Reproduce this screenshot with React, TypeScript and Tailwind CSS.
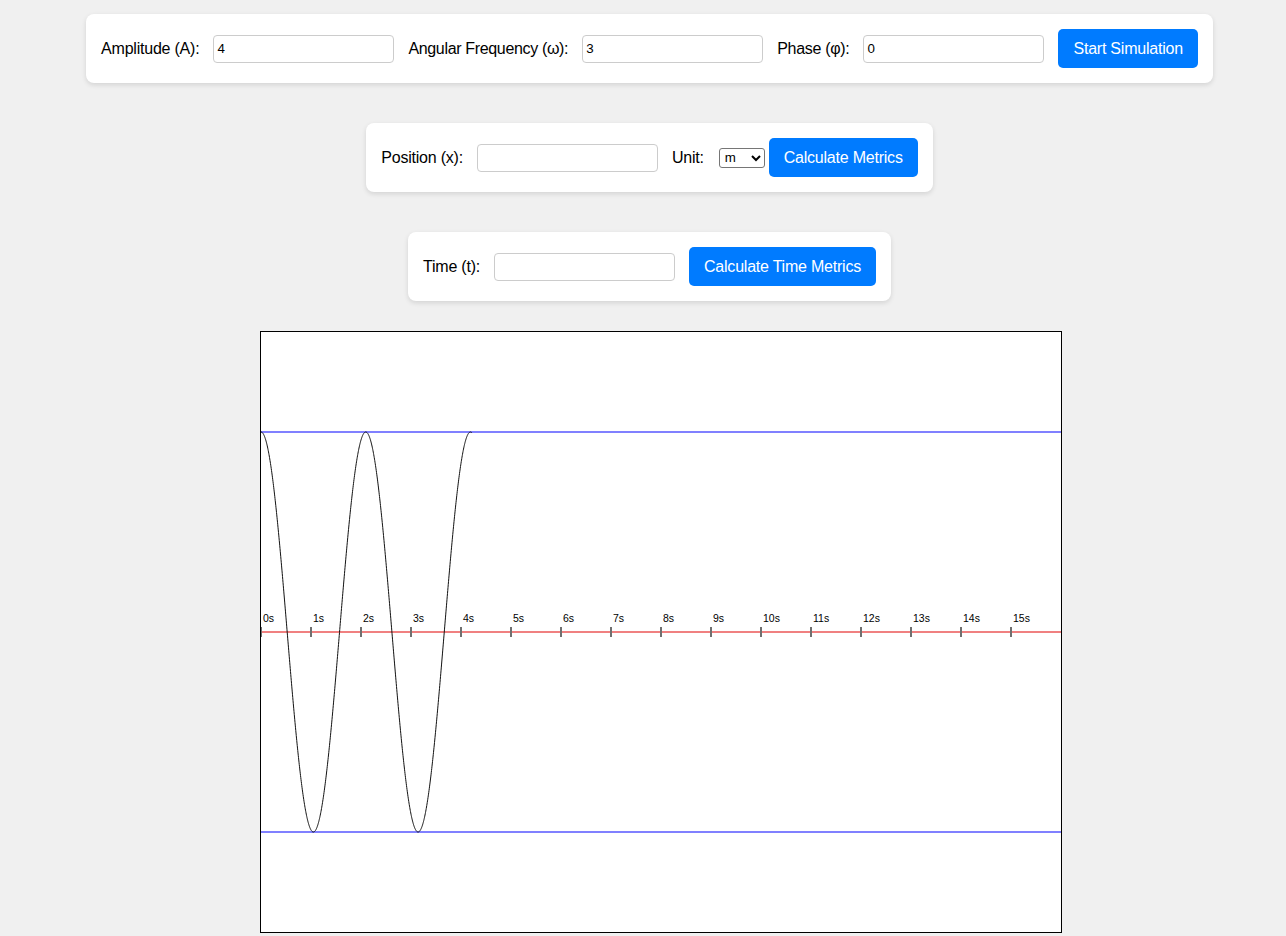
import React from "react";

const font = { fontFamily: '"Liberation Sans", Arial, sans-serif' };

function Wave() {
  const pts: string[] = [];
  for (let t = 0; t <= 4.22; t += 0.005) {
    const x = t * 50;
    const y = 300 - 200 * Math.cos(3 * t);
    pts.push(`${x.toFixed(2)},${y.toFixed(2)}`);
  }
  const ticks = Array.from({ length: 16 }, (_, i) => i);
  return (
    <svg width={800} height={600} className="block" style={font}>
      <rect x={0} y={0} width={800} height={600} fill="#ffffff" />
      <line x1={0} y1={100} x2={800} y2={100} stroke="#8080ff" strokeWidth={2} />
      <line x1={0} y1={500} x2={800} y2={500} stroke="#8080ff" strokeWidth={2} />
      <line x1={0} y1={300} x2={800} y2={300} stroke="#f08080" strokeWidth={2} />
      {ticks.map((i) => (
        <g key={i}>
          <line x1={i * 50} y1={295} x2={i * 50} y2={305} stroke="#707070" strokeWidth={2} />
          <text x={i * 50 + 2} y={290} fontSize={10.5} fill="#000">
            {i}s
          </text>
        </g>
      ))}
      <polyline points={pts.join(" ")} fill="none" stroke="#111" strokeWidth={1} />
    </svg>
  );
}

const panel =
  "bg-white rounded-[8px] p-[15px] flex items-center shadow-[0_2px_5px_rgba(0,0,0,0.12)] tracking-[-0.22px]";
const inputCls =
  "w-[181px] h-[28px] border border-[#cccccc] rounded-[4px] pl-[3px] text-[13.33px] tracking-normal text-black bg-white outline-none";
const btn =
  "bg-[#007bff] text-white text-[16px] rounded-[5px] px-[15px] h-[39px] leading-none whitespace-nowrap";

export default function App() {
  return (
    <div
      className="min-h-[936px] bg-[#f0f0f0] flex flex-col items-center pl-[13px] pt-[14px] text-black text-[16px]"
      style={font}
    >
      <div className={panel + " gap-[14px]"}>
        <span>Amplitude (A):</span>
        <input className={inputCls} defaultValue="4" />
        <span className="tracking-[-0.34px]">Angular Frequency (ω):</span>
        <input className={inputCls} defaultValue="3" />
        <span className="tracking-[-0.3px]">Phase (φ):</span>
        <input className={inputCls} defaultValue="0" />
        <button className={btn}>Start Simulation</button>
      </div>

      <div className={panel + " mt-[40px]"}>
        <span>Position (x):</span>
        <input className={inputCls + " ml-[14px]"} />
        <span className="ml-[14px]">Unit:</span>
        <select
          className="ml-[15px] w-[46px] h-[20px] border border-[#767676] rounded-[3px] text-[13.33px] tracking-normal bg-white pl-[1px]"
          defaultValue="m"
        >
          <option value="m">m</option>
          <option value="cm">cm</option>
          <option value="mm">mm</option>
        </select>
        <button className={btn + " ml-[4px]"}>Calculate Metrics</button>
      </div>

      <div className={panel + " mt-[40px] gap-[14px]"}>
        <span>Time (t):</span>
        <input className={inputCls} />
        <button className={btn}>Calculate Time Metrics</button>
      </div>

      <div className="mt-[30px] ml-[23px] border border-black">
        <Wave />
      </div>
    </div>
  );
}
